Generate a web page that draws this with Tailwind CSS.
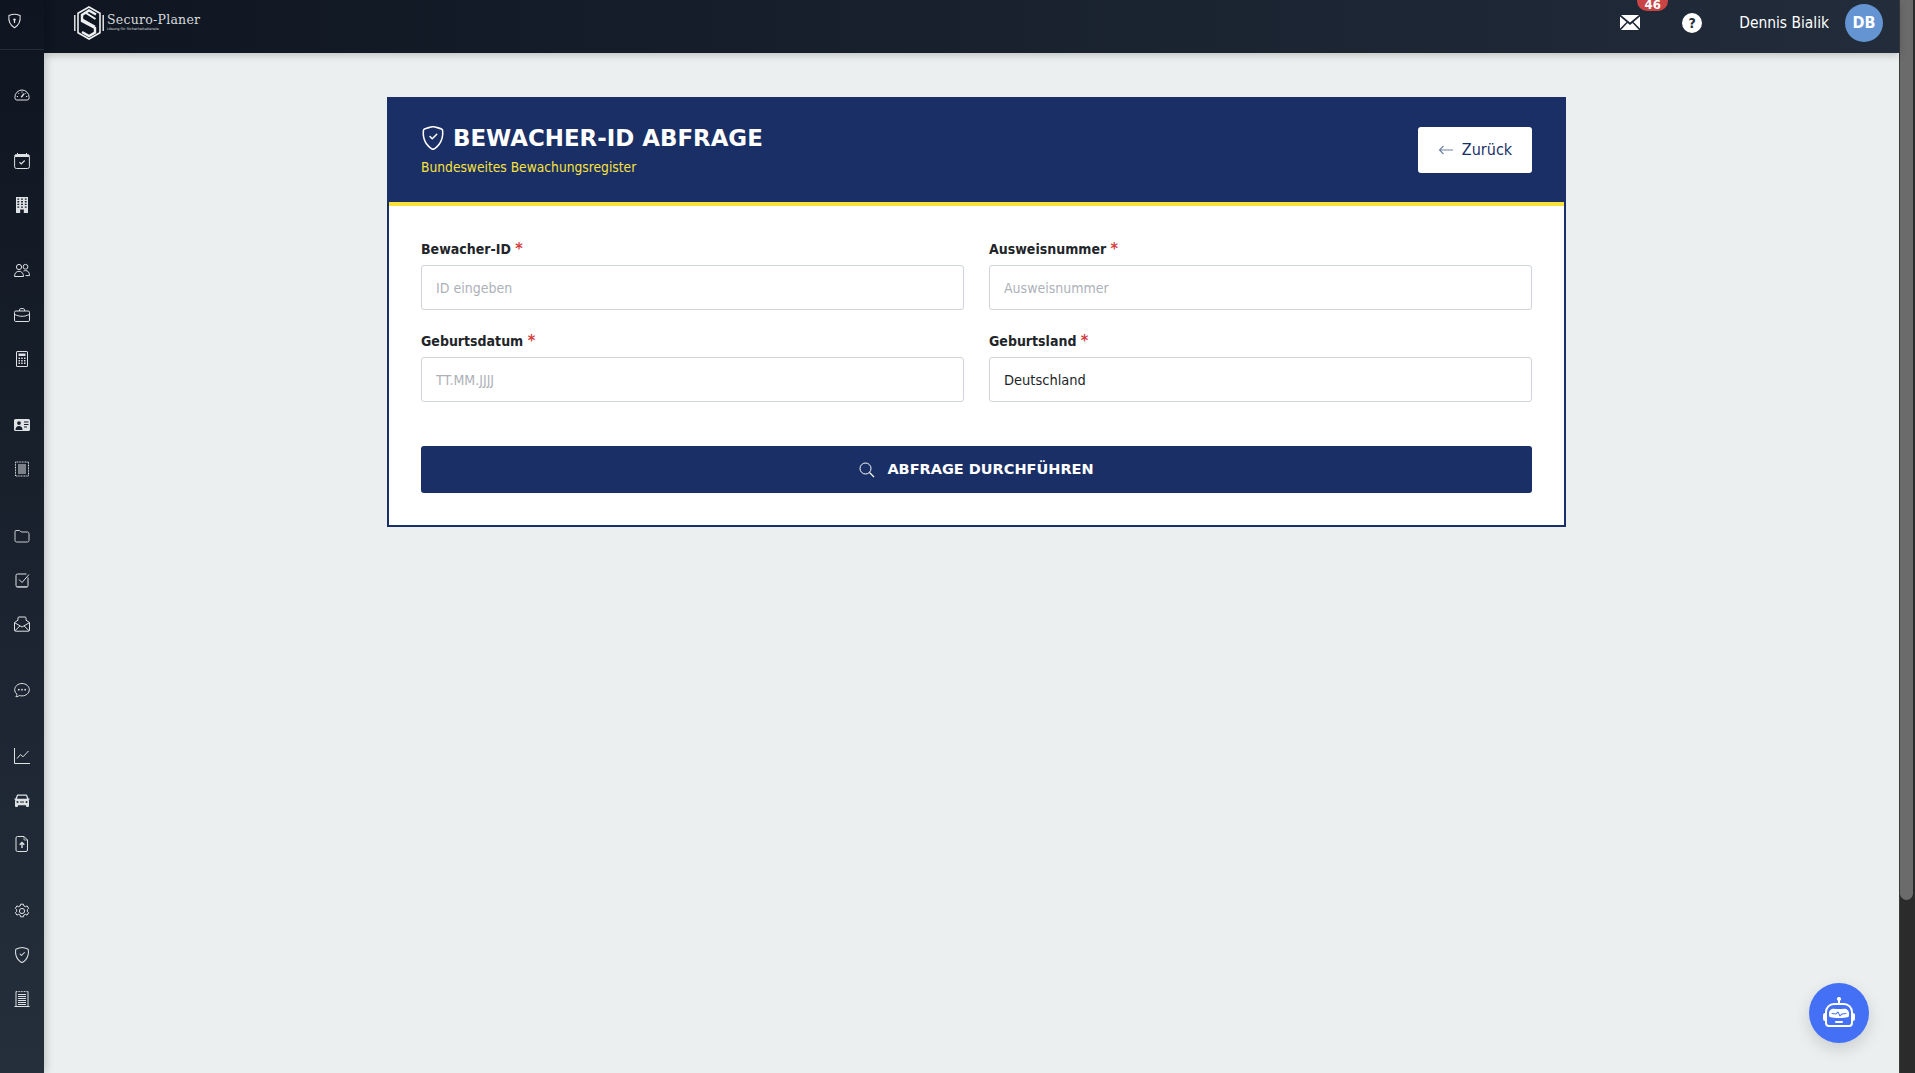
<!DOCTYPE html>
<html lang="de">
<head>
    <meta charset="UTF-8">
    <meta name="viewport" content="width=device-width, initial-scale=1.0">
    <title>Bewacher-ID Abfrage - Securo-Planer</title>
    <script src="https://cdn.jsdelivr.net/npm/@tailwindcss/browser@4"></script>
</head>
<body class="h-[1073px] overflow-hidden bg-[#ebeff0] font-['DejaVu_Sans_Condensed','DejaVu_Sans',sans-serif]">
<div class="flex h-[1073px]">
    <!-- sidebar -->
    <aside class="relative z-20 flex w-[44px] shrink-0 flex-col bg-gradient-to-b from-[#0e1520] to-[#252f3c] shadow-[2px_0_8px_rgba(0,0,0,0.18)]">
        <div class="flex h-[49.5px] items-center border-b border-white/10 pb-[7px] pl-[7px]">
            <svg class="h-[16px] w-[15px] text-[#e4e6e9]" viewBox="0 0 16 16" fill="none" stroke="currentColor" stroke-width="1.1"><path d="M8 .8c1.8 0 4.4.8 6 1.4.5 4.8-.6 10-6 13-5.4-3-6.500-8.200-6-13C3.600 1.600 6.200.8 8 .8z"/><circle cx="8" cy="6.500" r="1.300" fill="currentColor" stroke="none"/><path d="M8 7v3.200" stroke-width="1.300"/></svg>
        </div>
        <nav class="flex flex-col gap-[22.3px] pt-[23px] text-[#dfe2e5]">
            <div class="flex flex-col">
                <a href="#" class="flex h-[44px] items-center justify-center"><svg class="size-4" viewBox="0 0 16 16" fill="none" stroke="currentColor" stroke-width="1"><path d="M.9 10.500A7.200 7.200 0 0 1 8 3a7.200 7.200 0 0 1 7.100 7.500c0 1.100-.4 2-1.300 2.500H2.200C1.300 12.500.9 11.600.9 10.500z"/><path d="M8 4.500v1.300M4.300 6l.8.9M11.700 6l-.8.9M2.800 9.500h1.200M12 9.500h1.200"/><path d="M7.300 10.200 10 6.600" stroke-width="1.500"/></svg></a>
            </div>
            <div class="flex flex-col">
                <a href="#" class="flex h-[44px] items-center justify-center"><svg class="size-4" viewBox="0 0 16 16" fill="none" stroke="currentColor"><rect x=".6" y="1.500" width="14.800" height="14" rx="1.800" stroke-width="1"/><path d="M1 3h14" stroke-width="2"/><path d="M3.500 0v2M12.500 0v2" stroke-width="1"/><path d="m5.500 9.200 1.800 1.700 3.400-3.400" stroke-width="1.200"/></svg></a>
                <a href="#" class="flex h-[44px] items-center justify-center"><svg class="size-4" viewBox="0 0 16 16" fill="currentColor"><path fill-rule="evenodd" d="M2 0h12v16H9.800v-3.500H6.200V16H2zM3.400 1.400v1.300h1.800V1.400zm3.700 0v1.300h1.800V1.400zm3.700 0v1.300h1.800V1.400zM3.400 4.100v1.300h1.800V4.100zm3.700 0v1.300h1.800V4.100zm3.700 0v1.300h1.800V4.100zM3.400 6.800v1.300h1.800V6.800zm3.700 0v1.300h1.800V6.800zm3.700 0v1.300h1.800V6.800zM3.400 9.500v1.300h1.800V9.500zm3.700 0v1.300h1.800V9.500zm3.700 0v1.300h1.800V9.500z"/></svg></a>
            </div>
            <div class="flex flex-col">
                <a href="#" class="flex h-[44px] items-center justify-center"><svg class="size-4" viewBox="0 0 16 16" fill="none" stroke="currentColor" stroke-width="1"><circle cx="5" cy="4" r="2.600"/><circle cx="11.500" cy="3.800" r="2.400"/><path d="M.5 13.500c0-3.500 2-5.200 4.500-5.200s4.500 1.700 4.500 5.200z"/><path d="M9.500 8c.6-.2 1.300-.4 2-.4 2.300 0 4 1.500 4 5h-4"/></svg></a>
                <a href="#" class="flex h-[44px] items-center justify-center"><svg class="size-4" viewBox="0 0 16 16" fill="none" stroke="currentColor" stroke-width="1"><rect x=".5" y="4" width="15" height="10.500" rx="1.300"/><path d="M5.500 4V2.800c0-.7.5-1.200 1.200-1.200h2.600c.7 0 1.200.5 1.200 1.200V4"/><path d="M.7 7.500c2.500 1.200 5 1.800 7.300 1.800s4.800-.6 7.300-1.800"/></svg></a>
                <a href="#" class="flex h-[44px] items-center justify-center"><svg class="size-4" viewBox="0 0 16 16" fill="currentColor"><path fill-rule="evenodd" d="M3.500 0h9A1.500 1.500 0 0 1 14 1.500v13a1.500 1.500 0 0 1-1.500 1.500h-9A1.500 1.500 0 0 1 2 14.500v-13A1.500 1.500 0 0 1 3.500 0zm0 1a.5.5 0 0 0-.5.500v13a.5.500 0 0 0 .5.500h9a.5.500 0 0 0 .5-.5v-13a.5.500 0 0 0-.5-.5z"/><path d="M4.500 2.500h7v2.500h-7zM4.500 6.500H6V8H4.500zm2.700 0h1.500V8H7.200zm2.800 0h1.500V8H10zM4.500 9H6v1.500H4.500zm2.700 0h1.500v1.500H7.200zM10 9h1.500v1.500H10zm-5.500 2.500H6V13H4.500zm2.700 0h1.500V13H7.200zm2.800 0h1.500V13H10z"/></svg></a>
            </div>
            <div class="flex flex-col">
                <a href="#" class="flex h-[44px] items-center justify-center"><svg class="size-4" viewBox="0 0 16 16" fill="currentColor"><path fill-rule="evenodd" d="M1.500 2h13A1.500 1.500 0 0 1 16 3.500v9a1.500 1.500 0 0 1-1.500 1.500h-13A1.500 1.500 0 0 1 0 12.500v-9A1.500 1.500 0 0 1 1.500 2zM5 4.200a1.900 1.900 0 1 0 0 3.800 1.900 1.900 0 0 0 0-3.800zM1.500 13c0-2.400 1.500-4 3.500-4s3.500 1.600 3.500 4zM10 4.500v1h4.500v-1zM10 7v1h4.500V7zm0 2.500v1h3v-1z"/></svg></a>
                <a href="#" class="flex h-[44px] items-center justify-center"><svg class="size-4" viewBox="0 0 16 16" fill="none" stroke="currentColor"><rect x="1.500" y="1" width="13" height="14" stroke-width="1" stroke-dasharray="1 .6"/><path d="M4 4h8M4 6h8M4 8h8M4 10h8M4 12h8" stroke-width="1"/></svg></a>
            </div>
            <div class="flex flex-col">
                <a href="#" class="flex h-[44px] items-center justify-center"><svg class="size-4" viewBox="0 0 16 16" fill="none" stroke="currentColor" stroke-width=".9"><path d="M1 3.500c0-.6.4-1 1-1h3.200c.4 0 .7.100 1 .4l1 1.100h6.300c.8 0 1.500.7 1.500 1.500v7c0 .8-.7 1.500-1.500 1.500h-11c-.8 0-1.500-.7-1.500-1.500z"/></svg></a>
                <a href="#" class="flex h-[44px] items-center justify-center"><svg class="size-4" viewBox="0 0 16 16" fill="none" stroke="currentColor"><path d="M14 5.500v8a1.500 1.500 0 0 1-1.500 1.500h-9A1.500 1.500 0 0 1 2 13.500v-10A1.500 1.500 0 0 1 3.500 2h9" stroke-width="1"/><path d="m5 7.500 3 3 7-8" stroke-width="1"/><path d="M2.500 14.800h11" stroke-width="1.400" opacity=".6"/></svg></a>
                <a href="#" class="flex h-[44px] items-center justify-center"><svg class="size-4" viewBox="0 0 16 16" fill="none" stroke="currentColor" stroke-width="1"><path d="M.5 6.500 4 4.200V2a1 1 0 0 1 1-1h6a1 1 0 0 1 1 1v2.200l3.500 2.300v7.500a1.200 1.200 0 0 1-1.200 1.200H1.700A1.200 1.200 0 0 1 .5 14z"/><path d="M.8 6.800 8 11l7.200-4.200M1 14.700 6 9.800M15 14.700 10 9.800"/></svg></a>
            </div>
            <div class="flex flex-col">
                <a href="#" class="flex h-[44px] items-center justify-center"><svg class="size-4" viewBox="0 0 16 16" fill="none" stroke="currentColor" stroke-width="1"><path d="M8 1.500c4 0 7.300 2.800 7.300 6.200s-3.300 6.200-7.300 6.200c-.9 0-1.800-.1-2.600-.4-.6.500-1.800 1.200-3.500 1.300.6-.7 1-1.700 1.100-2.600C1.500 11.100.7 9.500.7 7.700.7 4.300 4 1.500 8 1.500z"/><circle cx="4.800" cy="7.700" r=".9" fill="currentColor" stroke="none"/><circle cx="8" cy="7.700" r=".9" fill="currentColor" stroke="none"/><circle cx="11.200" cy="7.700" r=".9" fill="currentColor" stroke="none"/></svg></a>
            </div>
            <div class="flex flex-col">
                <a href="#" class="flex h-[44px] items-center justify-center"><svg class="size-4" viewBox="0 0 16 16" fill="none" stroke="currentColor" stroke-width="1"><path d="M.5 0v15.500H16" /><path d="M3 10.500 6.500 6.500l2.500 2.300L14.500 3" /></svg></a>
                <a href="#" class="flex h-[44px] items-center justify-center"><svg class="size-4" viewBox="0 0 16 16" fill="currentColor"><path fill-rule="evenodd" d="M4.400 2.500h7.200c.9 0 1.600.5 1.900 1.400l.9 2.600h1.100v1l-.9.500c.3.400.4.800.4 1.300V14a1 1 0 0 1-1 1h-1a1 1 0 0 1-1-1v-.7H4V14a1 1 0 0 1-1 1H2a1 1 0 0 1-1-1V9.300c0-.5.100-.9.400-1.300L.5 7.500v-1h1.100l.9-2.600c.3-.9 1-1.400 1.900-1.400zm-.1 1.300c-.3 0-.5.200-.6.500L3 6.800h10l-.7-2.500c-.1-.3-.3-.5-.6-.5zM3.500 9a1 1 0 1 0 0 2 1 1 0 0 0 0-2zm9 0a1 1 0 1 0 0 2 1 1 0 0 0 0-2zM6 9.500v1h4v-1z"/></svg></a>
                <a href="#" class="flex h-[44px] items-center justify-center"><svg class="size-4" viewBox="0 0 16 16" fill="none" stroke="currentColor" stroke-width="1"><path d="M3.500.5H10L13.500 4v10a1.500 1.500 0 0 1-1.500 1.500H3.500A1.500 1.500 0 0 1 2 14V2A1.500 1.500 0 0 1 3.500.5z"/><path d="M10 .5V4h3.500" opacity=".7"/><path d="M8 12V6.500M5.700 8.800 8 6.500l2.300 2.300" stroke-width="1.400"/></svg></a>
            </div>
            <div class="flex flex-col">
                <a href="#" class="flex h-[44px] items-center justify-center"><svg class="size-4" viewBox="0 0 16 16" fill="none" stroke="currentColor" stroke-width="1"><circle cx="8" cy="8" r="2.600"/><path d="M6.600 1.200h2.800l.5 1.800 1.500.7 1.700-.8 1.500 2.400-1.300 1.400v1.600l1.300 1.400-1.500 2.400-1.700-.8-1.500.7-.5 1.800H6.600l-.5-1.800-1.500-.7-1.700.8-1.500-2.400 1.300-1.400V6.700L1.400 5.300l1.500-2.400 1.700.8 1.500-.7z" stroke-linejoin="round"/></svg></a>
                <a href="#" class="flex h-[44px] items-center justify-center"><svg class="size-4" viewBox="0 0 16 16" fill="currentColor"><path d="M5.338 1.59a61.44 61.44 0 0 0-2.837.856.481.481 0 0 0-.328.39c-.554 4.157.726 7.19 2.253 9.188a10.725 10.725 0 0 0 2.287 2.233c.346.244.652.42.893.533.12.057.218.095.293.118a.55.55 0 0 0 .101.025.615.615 0 0 0 .1-.025c.076-.023.174-.061.294-.118.24-.113.547-.29.893-.533a10.726 10.726 0 0 0 2.287-2.233c1.527-1.997 2.807-5.031 2.253-9.188a.48.48 0 0 0-.328-.39c-.651-.213-1.75-.56-2.837-.855C9.552 1.29 8.531 1.067 8 1.067c-.53 0-1.552.223-2.662.524zM5.072.56C6.157.265 7.31 0 8 0s1.843.265 2.928.56c1.11.3 2.229.655 2.887.87a1.54 1.54 0 0 1 1.044 1.262c.596 4.477-.787 7.795-2.465 9.99a11.775 11.775 0 0 1-2.517 2.453 7.159 7.159 0 0 1-1.048.625c-.28.132-.581.24-.829.24s-.548-.108-.829-.24a7.158 7.158 0 0 1-1.048-.625 11.777 11.777 0 0 1-2.517-2.453C1.928 10.487.545 7.169 1.141 2.692A1.54 1.54 0 0 1 2.185 1.43 62.456 62.456 0 0 1 5.072.56z"/><path d="M10.854 5.146a.5.5 0 0 1 0 .708l-3 3a.5.5 0 0 1-.708 0l-1.500-1.500a.5.5 0 1 1 .708-.708L7.500 7.793l2.646-2.647a.5.5 0 0 1 .708 0z"/></svg></a>
                <a href="#" class="flex h-[44px] items-center justify-center"><svg class="size-4" viewBox="0 0 16 16" fill="none" stroke="currentColor"><path d="M2 .5v15M14 .5v15M0.500 15.500h15" stroke-width="1"/><path d="M2 .6h12" stroke-width="1" stroke-dasharray="1 .6"/><path d="M4 3.500h8M4 5.500h8M4 7.500h8M4 9.500h8M4 11.500h8M4 13.500h8" stroke-width="1"/></svg></a>
            </div>
        </nav>
    </aside>

    <div class="flex min-w-0 flex-1 flex-col">
        <!-- topbar -->
        <header class="relative z-10 flex h-[53px] shrink-0 items-center bg-gradient-to-r from-[#0f1622] to-[#222c3a] pl-[30px] pr-[16px] shadow-[0_2px_8px_rgba(0,0,0,0.2)]">
            <svg class="h-[34px] w-[30px] -translate-y-[4px] text-[#eef0f1]" viewBox="0 0 30 34" fill="none" stroke="currentColor"><path d="M.8 9v16M29.200 9v16" stroke-width="1.400"/><path d="M15 1 26 7.300v19.400L15 33 4 26.700V7.300z" stroke-width="1.600"/><path d="M22 8.500 15 4.500 8 9v6l13 7v4.500l-6 3.500-7-4" stroke-width="2.400"/><path d="M8.500 13.500 21 20.500M12 7l9.500 6" stroke-width="2"/></svg>
            <div class="ml-[3px] flex -translate-y-[4px] flex-col font-['DejaVu_Serif',serif] leading-none text-[#d8dadd]">
                <span class="text-[12.500px] tracking-[0.25px]">Securo-Planer</span>
                <span class="mt-[1px] font-['DejaVu_Sans',sans-serif] text-[3.500px]">Lösung für Sicherheitsdienste</span>
            </div>
            <div class="ml-auto flex items-center pb-[7px] text-white">
                <a href="#" class="relative flex h-[16px] w-[20px]">
                    <svg class="h-[15px] w-[20px]" viewBox="0 0 20 15" fill="currentColor"><path d="M1 0h18L10 7.500zM0 1.500v12L6.500 7zM20 1.500v12L13.500 7zM7.500 8 10 10l2.500-2L19 15H1z"/></svg>
                    <span class="absolute -top-[19px] left-[17px] flex h-[15px] w-[31px] items-end justify-center rounded-b-[10px] rounded-t-[4px] bg-[#c94545] text-[13px] leading-none font-bold">46</span>
                </a>
                <a href="#" class="ml-[42px] flex size-[20px] items-center justify-center rounded-full bg-white text-[14px] leading-none font-bold text-[#222c3a]">?</a>
                <span class="ml-[37px] mt-[2px] text-[15.400px]">Dennis Bialik</span>
                <span class="ml-[16px] flex size-[38px] items-center justify-center rounded-full bg-[#6494d2] text-[16px] font-bold">DB</span>
            </div>
        </header>

        <!-- content -->
        <main class="flex-1 pl-[10px] pt-[44px]">
            <div class="mx-auto w-[1179px] border-2 border-[#1a2f66] bg-white">
                <div class="-mx-[2px] flex h-[103px] items-center justify-between bg-[#1a2f66] px-[34px] pb-[2px]">
                    <div class="mb-[2px]">
                        <div class="flex items-center gap-[8px]">
                            <svg class="size-[24px] text-white" viewBox="0 0 16 16" fill="currentColor"><path d="M5.338 1.59a61.44 61.44 0 0 0-2.837.856.481.481 0 0 0-.328.39c-.554 4.157.726 7.19 2.253 9.188a10.725 10.725 0 0 0 2.287 2.233c.346.244.652.42.893.533.12.057.218.095.293.118a.55.55 0 0 0 .101.025.615.615 0 0 0 .1-.025c.076-.023.174-.061.294-.118.24-.113.547-.29.893-.533a10.726 10.726 0 0 0 2.287-2.233c1.527-1.997 2.807-5.031 2.253-9.188a.48.48 0 0 0-.328-.39c-.651-.213-1.75-.56-2.837-.855C9.552 1.29 8.531 1.067 8 1.067c-.53 0-1.552.223-2.662.524zM5.072.56C6.157.265 7.31 0 8 0s1.843.265 2.928.56c1.11.3 2.229.655 2.887.87a1.54 1.54 0 0 1 1.044 1.262c.596 4.477-.787 7.795-2.465 9.99a11.775 11.775 0 0 1-2.517 2.453 7.159 7.159 0 0 1-1.048.625c-.28.132-.581.24-.829.24s-.548-.108-.829-.24a7.158 7.158 0 0 1-1.048-.625 11.777 11.777 0 0 1-2.517-2.453C1.928 10.487.545 7.169 1.141 2.692A1.54 1.54 0 0 1 2.185 1.43 62.456 62.456 0 0 1 5.072.56z"/><path d="M10.854 5.146a.5.5 0 0 1 0 .708l-3 3a.5.5 0 0 1-.708 0l-1.500-1.500a.5.5 0 1 1 .708-.708L7.500 7.793l2.646-2.647a.5.5 0 0 1 .708 0z"/></svg>
                            <h1 class="font-['DejaVu_Sans',sans-serif] text-[22.900px] leading-[32px] font-bold text-white">BEWACHER-ID ABFRAGE</h1>
                        </div>
                        <p class="mt-[4px] text-[13.700px] leading-[18px] text-[#f9e13c]">Bundesweites Bewachungsregister</p>
                    </div>
                    <a href="#" class="flex h-[46px] w-[114px] items-center justify-center gap-[8px] rounded-[3px] bg-white pt-[1px] text-[16px] text-[#1a2f66]">
                        <svg class="size-[16px] text-[#6f7fa3]" viewBox="0 0 16 16" fill="none" stroke="currentColor" stroke-width="1.100"><path d="M15 8H1.500M5.500 4l-4 4 4 4"/></svg>
                        Zurück
                    </a>
                </div>
                <div class="h-[4px] bg-[#f9e13c]"></div>
                <form class="px-[32px] pt-[34px] pb-[32px]">
                    <div class="grid grid-cols-2 gap-x-[25px] gap-y-[22px]">
                        <div>
                            <label class="mb-[7px] block text-[14px] leading-[18px] font-bold text-[#212529]">Bewacher-ID <span class="text-[16px] leading-none text-[#d43f3f]">*</span></label>
                            <input type="text" placeholder="ID eingeben" class="block h-[45px] w-full rounded-[3px] border border-[#ced4da] px-[14px] text-[14px] text-[#212529] placeholder:text-[#adb1b8]">
                        </div>
                        <div>
                            <label class="mb-[7px] block text-[14px] leading-[18px] font-bold text-[#212529]">Ausweisnummer <span class="text-[16px] leading-none text-[#d43f3f]">*</span></label>
                            <input type="text" placeholder="Ausweisnummer" class="block h-[45px] w-full rounded-[3px] border border-[#ced4da] px-[14px] text-[14px] text-[#212529] placeholder:text-[#adb1b8]">
                        </div>
                        <div>
                            <label class="mb-[7px] block text-[14px] leading-[18px] font-bold text-[#212529]">Geburtsdatum <span class="text-[16px] leading-none text-[#d43f3f]">*</span></label>
                            <input type="text" placeholder="TT.MM.JJJJ" class="block h-[45px] w-full rounded-[3px] border border-[#ced4da] px-[14px] text-[14px] text-[#212529] placeholder:text-[#adb1b8]">
                        </div>
                        <div>
                            <label class="mb-[7px] block text-[14px] leading-[18px] font-bold text-[#212529]">Geburtsland <span class="text-[16px] leading-none text-[#d43f3f]">*</span></label>
                            <input type="text" value="Deutschland" class="block h-[45px] w-full rounded-[3px] border border-[#ced4da] px-[14px] text-[14.500px] text-[#212529]">
                        </div>
                    </div>
                    <button type="button" class="mt-[44px] flex h-[47px] w-full items-center justify-center gap-[12px] rounded-[3px] bg-[#1a2f66] pt-[1px] font-['DejaVu_Sans',sans-serif] text-[14.500px] font-bold text-white">
                        <svg class="size-[16px]" viewBox="0 0 16 16" fill="none" stroke="currentColor" stroke-width="1"><circle cx="6.500" cy="6.500" r="5.500"/><path d="m10.500 10.500 4.500 4.500" stroke-width="1.300"/></svg>
                        ABFRAGE DURCHFÜHREN
                    </button>
                </form>
            </div>
        </main>
    </div>

    <!-- scrollbar -->
    <div class="w-[16px] shrink-0 border-l border-[#3a3a3a] bg-[#2b2b2b]">
        <div class="h-[900px] w-[13px] rounded-b-[7px] bg-[#6b6b6b]"></div>
    </div>
</div>

<!-- chat bot -->
<a href="#" class="fixed left-[1809px] top-[983px] z-30 flex size-[60px] items-center justify-center rounded-full bg-[#4370f5] shadow-[0_6px_16px_rgba(0,0,0,0.14)]">
    <svg class="size-[32px] text-white" viewBox="0 0 16 16" fill="currentColor"><path d="M6 12.500a.5.5 0 0 1 .5-.5h3a.5.5 0 0 1 0 1h-3a.5.5 0 0 1-.5-.5ZM3 8.062C3 6.760 4.235 5.765 5.530 5.886a26.580 26.580 0 0 0 4.940 0C11.765 5.765 13 6.760 13 8.062v1.157a.933.933 0 0 1-.765.935c-.845.147-2.340.346-4.235.346-1.895 0-3.390-.2-4.235-.346A.933.933 0 0 1 3 9.219V8.062Zm4.542-.827a.25.25 0 0 0-.217.068l-.92.9a24.767 24.767 0 0 1-1.871-.183.25.25 0 0 0-.068.495c.55.076 1.232.149 2.020.193a.25.25 0 0 0 .189-.071l.754-.736.847 1.710a.25.25 0 0 0 .404.062l.932-.97a25.286 25.286 0 0 0 1.922-.188.25.25 0 0 0-.068-.495c-.538.074-1.207.145-1.980.189a.25.25 0 0 0-.166.076l-.754.785-.842-1.700a.25.25 0 0 0-.182-.135Z"/><path d="M8.500 1.866a1 1 0 1 0-1 0V3h-2A4.500 4.500 0 0 0 1 7.500V8a1 1 0 0 0-1 1v2a1 1 0 0 0 1 1v1a2 2 0 0 0 2 2h10a2 2 0 0 0 2-2v-1a1 1 0 0 0 1-1V9a1 1 0 0 0-1-1v-.5A4.500 4.500 0 0 0 10.500 3h-2V1.866ZM14 7.500V13a1 1 0 0 1-1 1H3a1 1 0 0 1-1-1V7.500A3.500 3.500 0 0 1 5.500 4h5A3.500 3.500 0 0 1 14 7.500Z"/></svg>
</a>
</body>
</html>
